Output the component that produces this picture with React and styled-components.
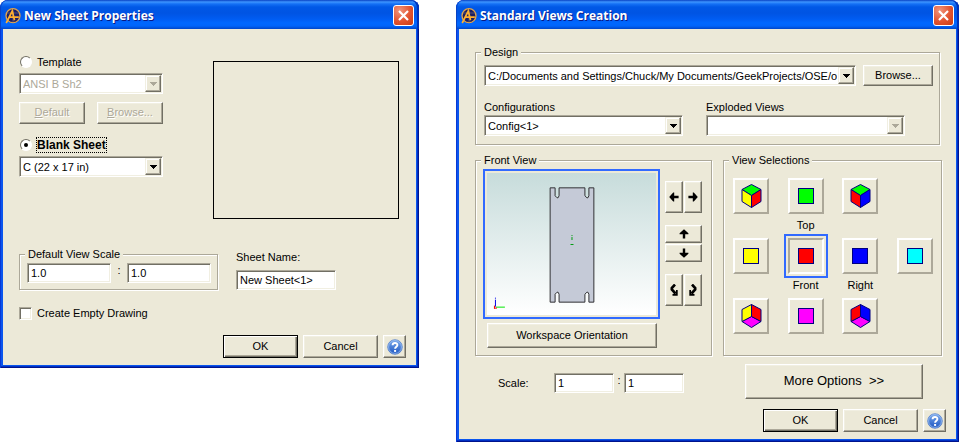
import React, { useId } from "react";
import styled, { createGlobalStyle, css } from "styled-components";

const face = "#ece9d8";
const shade = "#aca899";
const dark = "#716f64";
const light = "#f1efe2";

const GlobalStyle = createGlobalStyle`
  * { box-sizing: border-box; }
  body {
    margin: 0;
    background: #fff;
    color: #000;
    font: 11px/14px "Liberation Sans", Arial, sans-serif;
  }
  button, input, select {
    font: inherit;
    color: inherit;
    margin: 0;
    border-radius: 0;
  }
`;

const Desktop = styled.main`
  display: grid;
  grid-template-columns: minmax(0, 419fr) minmax(0, 503fr);
  gap: 37px;
  align-items: start;
`;

const WindowFrame = styled.section`
  padding: 0 3px 3px;
  border-radius: 8px 8px 0 0;
  overflow: hidden;
  background: #0a55ee;
  box-shadow:
    inset 1px 0 #0838d4,
    inset -1px -1px #00138c,
    inset -2px -2px #0030c4;
`;

const TitleBar = styled.header`
  display: flex;
  align-items: center;
  height: 29px;
  margin: 0 -3px;
  padding: 2px 5px 0;
  gap: 3px;
  border-radius: 8px 8px 0 0;
  background: linear-gradient(
    #0842c4 0, #3d95ff 2px, #1470f5 4px, #0058e6 7px, #0054e3 13px,
    #005cf2 19px, #0068ff 23px, #0064fa 26px, #0046c8 29px
  );
  box-shadow: inset 1px 0 #0842c4, inset -2px 0 #0030b8;
`;

const Title = styled.h1`
  flex: 1;
  margin: 0;
  color: #fff;
  font: bold 12px/18px "Open Sans", "Noto Sans", sans-serif;
  text-shadow: 1px 1px #0a1883;
  white-space: nowrap;
`;

const CloseButton = styled.button`
  display: grid;
  place-items: center;
  width: 21px;
  height: 21px;
  padding: 0;
  border: 1px solid #fff;
  border-radius: 3px;
  background: radial-gradient(circle at 30% 25%, #f0957c, #e2532f 55%, #c93a12);
`;

const Body = styled.form`
  display: flex;
  flex-direction: column;
  background: ${face};
`;

const SheetBody = styled(Body)`
  padding: 25px 10px 7px 16px;
`;

const ViewsBody = styled(Body)`
  padding: 16px 10px 7px 16px;
`;

const Group = styled.fieldset`
  min-width: 0;
  margin: 0;
  padding: 0;
  border: 1px solid ${shade};
  box-shadow: 1px 1px #fff, inset 1px 1px #fff;
`;

const GroupContent = styled.div`
  padding: ${(p) => p.$pad};
`;

const Legend = styled.legend`
  margin-left: 5px;
  padding: 0 3px;
  height: 14px;
  background: ${face};
`;

const sunken = css`
  border: 1px solid;
  border-color: ${shade} #fff #fff ${shade};
  box-shadow: inset 1px 1px ${dark}, inset -1px -1px ${light};
  background: #fff;
`;

const TextInput = styled.input`
  ${sunken}
  min-width: 0;
  width: 100%;
  height: 20px;
  padding: 1px 3px 2px;
  outline: 0;
`;

const raised = css`
  border: 1px solid;
  border-color: #fff ${dark} ${dark} #fff;
  box-shadow: inset -1px -1px ${shade}, inset 1px 1px ${light};
  background: ${face};
`;

const PushButton = styled.button`
  ${raised}
  display: flex;
  align-items: center;
  justify-content: center;
  flex: ${(p) => p.$flex || "none"};
  width: ${(p) => p.$width || "75px"};
  height: ${(p) => p.$height || "23px"};
  padding: ${(p) => (p.$icon ? "0" : "0 0 2px")};
  white-space: pre;
  font-size: ${(p) => (p.$large ? "13px" : "11px")};
  ${(p) => p.$primary && css`
    border-color: #000;
    box-shadow: inset 1px 1px #fff, inset -1px -1px ${dark}, inset -2px -2px ${shade};
  `}
  &:disabled {
    color: ${shade};
    text-shadow: 1px 1px #fff;
  }
`;

const Mnemonic = styled.span`
  text-decoration: underline;
`;

const ComboFrame = styled.span`
  ${sunken}
  display: grid;
  grid-template-columns: minmax(0, 1fr) 16px;
  flex: ${(p) => p.$flex || "none"};
  min-width: 0;
  height: 21px;
  padding: 1px;
`;

const ComboSelect = styled.select`
  grid-area: 1 / 1 / 2 / 3;
  appearance: none;
  min-width: 0;
  width: 100%;
  padding: 0 17px 0 2px;
  border: 0;
  outline: 0;
  background: transparent;
  &:disabled { color: ${shade}; opacity: 1; }
`;

const ComboArrow = styled.span`
  ${raised}
  grid-area: 1 / 2;
  display: grid;
  place-items: center;
  border-color: ${light} ${dark} ${dark} ${light};
  box-shadow: inset -1px -1px ${shade}, inset 1px 1px #fff;
  pointer-events: none;
`;

function Combo({ label, value, disabled, flex }) {
  return (
    <ComboFrame $flex={flex}>
      <ComboSelect aria-label={label} disabled={disabled} defaultValue={value}>
        <option>{value}</option>
      </ComboSelect>
      <ComboArrow>
        <svg width="7" height="4" shapeRendering="crispEdges" aria-hidden="true">
          <path d="M0 0h7v1H6v1H5v1H4v1H3V3H2V2H1V1H0z" fill={disabled ? shade : "#000"} />
        </svg>
      </ComboArrow>
    </ComboFrame>
  );
}

/* New Sheet Properties */

const SheetTop = styled.div`
  display: grid;
  grid-template-columns: 144px minmax(0, 1fr);
  gap: 50px;
  padding-right: 7px;
`;

const SheetOptions = styled.div`
  display: flex;
  flex-direction: column;
  gap: 3px;
`;

const ChoiceLabel = styled.label`
  display: flex;
  align-items: center;
  height: 16px;
  gap: 5px;
`;

const Radio = styled.input`
  appearance: none;
  display: grid;
  place-items: center;
  width: 12px;
  height: 12px;
  margin: 0 0 0 1px;
  border: 1px solid;
  border-color: ${dark} #fff #fff ${dark};
  border-radius: 50%;
  background: #fff;
  &:checked::before {
    content: "";
    width: 4px;
    height: 4px;
    border-radius: 50%;
    background: #000;
  }
`;

const CheckBox = styled.input`
  ${sunken}
  appearance: none;
  width: 13px;
  height: 13px;
`;

const FocusedText = styled.span`
  outline: 1px dotted #000;
  font-weight: bold;
  font-size: 12px;
`;

const TemplateButtons = styled.div`
  display: flex;
  justify-content: space-between;
  padding: 5px 0 10px;
`;

const SheetPreview = styled.div`
  height: 158px;
  margin-top: 7px;
  border: 1px solid #000;
`;

const SheetFields = styled.div`
  display: grid;
  grid-template-columns: minmax(0, 199fr) minmax(0, 100fr);
  align-items: end;
  gap: 18px;
  margin: 28px 70px 15px 0;
`;

const Ratio = styled.div`
  display: grid;
  grid-template-columns: minmax(0, 1fr) ${(p) => p.$gap} minmax(0, 1fr);
  text-align: center;
`;

const NameField = styled.label`
  display: flex;
  flex-direction: column;
  gap: 6px;
  min-width: 0;
`;

const Footer = styled.footer`
  display: flex;
  justify-content: flex-end;
  gap: 5px;
  margin-top: ${(p) => p.$top};
`;

/* Standard Views Creation */

const DesignGroup = styled(Group)`
  margin-right: 6px;
`;

const PathRow = styled.div`
  display: flex;
  gap: 7px;
`;

const ConfigRow = styled.div`
  display: grid;
  grid-template-columns: minmax(0, 1fr) minmax(0, 1fr);
  gap: 23px;
  margin: 14px 28px 0 0;
`;

const Field = styled.label`
  display: flex;
  flex-direction: column;
  gap: 1px;
`;

const Panels = styled.div`
  display: grid;
  grid-template-columns: minmax(0, 237fr) minmax(0, 219fr);
  gap: 11px;
  margin: 8px 4px 17px 0;
`;

const FrontContent = styled.div`
  display: grid;
  grid-template-columns: minmax(0, 1fr) 37px;
  gap: 5px;
  padding: 2px 9px 7px 7px;
`;

const FrontColumn = styled.div`
  display: flex;
  flex-direction: column;
  gap: 4px;
`;

const Viewport = styled.div`
  display: flex;
  padding: 2px;
  border: 2px solid #316aff;
`;

const Drawing = styled.svg`
  width: 100%;
  height: 142px;
  background: linear-gradient(#c7dcdb, #fff);
`;

const OrientationRow = styled.div`
  display: flex;
  padding: 0 3px 0 4px;
`;

const MoveButtons = styled.div`
  display: flex;
  flex-direction: column;
  gap: 12px;
  padding-top: 12px;
`;

const ButtonPair = styled.div`
  display: flex;
  flex-direction: ${(p) => (p.$stack ? "column" : "row")};
  gap: 1px;
`;

const ArrowButton = styled.button`
  ${raised}
  display: grid;
  place-items: center;
  width: ${(p) => (p.$wide ? "37px" : "18px")};
  height: ${(p) => (p.$wide ? "18px" : "32px")};
  padding: 0;
`;

const ViewGrid = styled.div`
  display: grid;
  grid-template-columns: repeat(4, 36px);
  grid-template-rows: 60px 60px 56px;
  justify-content: space-between;
  padding: 11px 8px 0 9px;
`;

const ViewCell = styled.div`
  display: flex;
  flex-direction: column;
  align-items: center;
  gap: 4px;
`;

const ViewButton = styled.button`
  display: grid;
  place-items: center;
  width: 36px;
  height: 36px;
  padding: 0;
  border: 2px solid;
  border-color: #fff ${shade} ${shade} #fff;
  background: ${face};
  ${(p) => p.$active && css`
    border-color: ${shade} #fff #fff ${shade};
    outline: 2px solid #316aff;
    outline-offset: 2px;
  `}
`;

const OptionsRow = styled.div`
  display: flex;
  justify-content: space-between;
  align-items: flex-start;
  padding: 0 23px;
  margin-top: -9px;
`;

const ScaleField = styled.div`
  display: grid;
  grid-template-columns: 56px 130px;
  align-items: center;
  margin-top: 9px;
`;

const AppIcon = () => (
  <svg width="16" height="16" viewBox="0 0 16 16" aria-hidden="true">
    <circle cx="8" cy="7.7" r="7" fill="#1c1f62" stroke="#e0a44c" strokeWidth="1.3" />
    <path d="M8 1.5v13M2 5h12" stroke="#6d6480" strokeWidth=".7" />
    <path d="M1.2 15L7.3 3L9.5 12.3M3.8 9.2h10" fill="none" stroke="#ffb030" strokeWidth="1.7" />
  </svg>
);

const HelpIcon = () => {
  const id = useId();
  return (
    <svg width="16" height="16" viewBox="0 0 16 16" aria-hidden="true">
      <defs>
        <linearGradient id={id} x1="0" y1="0" x2="0" y2="1">
          <stop offset="0" stopColor="#78a8ec" />
          <stop offset="1" stopColor="#1c55c0" />
        </linearGradient>
      </defs>
      <circle cx="8" cy="8" r="7.3" fill={`url(#${id})`} stroke="#5a84cc" strokeWidth=".8" />
      <circle cx="8" cy="8" r="6.4" fill="none" stroke="#a9c8f5" strokeWidth=".7" />
      <path d="M5.6 6.3C5.6 3.2 10.5 3.3 10.4 6C10.4 7.7 8.1 7.7 8.1 9.8" fill="none" stroke="#fff" strokeWidth="1.9" />
      <path d="M7.1 11h2v1.9h-2z" fill="#fff" />
    </svg>
  );
};

function Window({ title, children }) {
  return (
    <WindowFrame aria-label={title}>
      <TitleBar>
        <AppIcon />
        <Title>{title}</Title>
        <CloseButton type="button" aria-label="Close">
          <svg width="11" height="11" aria-hidden="true">
            <path d="M1 1l9 9M10 1l-9 9" stroke="#fff" strokeWidth="2.2" />
          </svg>
        </CloseButton>
      </TitleBar>
      {children}
    </WindowFrame>
  );
}

function DialogButtons({ top }) {
  return (
    <Footer $top={top}>
      <PushButton type="button" $primary>OK</PushButton>
      <PushButton type="button">Cancel</PushButton>
      <PushButton type="button" $icon $width="23px" aria-label="Help"><HelpIcon /></PushButton>
    </Footer>
  );
}

const arrowTurns = { left: 0, up: 90, right: 180, down: 270 };

const StraightArrow = ({ to }) => (
  <svg width="10" height="10" viewBox="0 0 10 10" aria-hidden="true">
    <path
      d="M.2 5L4.2 .6h1v3.2H9.6v2.4H5.2V9.4h-1z"
      transform={`rotate(${arrowTurns[to]} 5 5)`}
    />
  </svg>
);

const CurvedArrow = ({ mirrored }) => (
  <svg width="8" height="12" viewBox="0 0 8 12" aria-hidden="true">
    <g transform={mirrored ? "translate(8 0) scale(-1 1)" : undefined}>
      <path d="M5 .5L1.8 4v1.5L5.5 9.5" fill="none" stroke="#000" strokeWidth="2.6" />
      <path d="M7.7 6v5.7H2.5V10L6 9.5V6z" />
    </g>
  </svg>
);

const Square = ({ color }) => (
  <svg width="16" height="16" aria-hidden="true">
    <rect x=".5" y=".5" width="15" height="15" fill={color} stroke="#000080" />
  </svg>
);

const cubeFaces = {
  above: ["M10.5 .5l9.5 5-9.5 6L1 5.5z", "M1 5.5l9.5 6v12L1 17.5z", "M20 5.5l-9.5 6v12l9.5-6z"],
  below: ["M10.5 12.5l9.5 5-9.5 6L1 17.5z", "M1 5.5l9.5-5v12L1 17.5z", "M20 5.5l-9.5-5v12l9.5 5z"],
};

const Cube = ({ from, colors }) => (
  <svg width="21" height="24" viewBox="0 0 21 24" aria-hidden="true">
    {cubeFaces[from].map((d, i) => (
      <path key={d} d={d} fill={colors[i]} stroke="#000080" strokeLinejoin="round" />
    ))}
  </svg>
);

const red = "#ff0000", green = "#00ff00", blue = "#0000ff";
const yellow = "#ffff00", cyan = "#00ffff", magenta = "#ff00ff";

const views = [
  { name: "Top left isometric", icon: <Cube from="above" colors={[green, yellow, red]} /> },
  { name: "Top", caption: true, icon: <Square color={green} /> },
  { name: "Top right isometric", icon: <Cube from="above" colors={[green, red, blue]} /> },
  null,
  { name: "Left", icon: <Square color={yellow} /> },
  { name: "Front", caption: true, active: true, icon: <Square color={red} /> },
  { name: "Right", caption: true, icon: <Square color={blue} /> },
  { name: "Back", icon: <Square color={cyan} /> },
  { name: "Bottom left isometric", icon: <Cube from="below" colors={[magenta, yellow, red]} /> },
  { name: "Bottom", icon: <Square color={magenta} /> },
  { name: "Bottom right isometric", icon: <Cube from="below" colors={[magenta, red, blue]} /> },
];

function NewSheetProperties() {
  return (
    <Window title="New Sheet Properties">
      <SheetBody>
        <SheetTop>
          <SheetOptions>
            <ChoiceLabel>
              <Radio type="radio" name="source" />
              <span>Template</span>
            </ChoiceLabel>
            <Combo label="Template" value="ANSI B Sh2" disabled />
            <TemplateButtons>
              <PushButton type="button" disabled $width="66px" $height="22px">
                <Mnemonic>D</Mnemonic>efault
              </PushButton>
              <PushButton type="button" disabled $width="66px" $height="22px">
                <Mnemonic>B</Mnemonic>rowse...
              </PushButton>
            </TemplateButtons>
            <ChoiceLabel>
              <Radio type="radio" name="source" defaultChecked />
              <FocusedText>Blank Sheet</FocusedText>
            </ChoiceLabel>
            <Combo label="Sheet size" value="C (22 x 17 in)" />
          </SheetOptions>
          <SheetPreview />
        </SheetTop>
        <SheetFields>
          <Group>
            <Legend>Default View Scale</Legend>
            <GroupContent $pad="2px 6px 6px 7px">
              <Ratio $gap="16px">
                <TextInput aria-label="Scale numerator" defaultValue="1.0" />
                <span>:</span>
                <TextInput aria-label="Scale denominator" defaultValue="1.0" />
              </Ratio>
            </GroupContent>
          </Group>
          <NameField>
            Sheet Name:
            <TextInput defaultValue="New Sheet<1>" />
          </NameField>
        </SheetFields>
        <ChoiceLabel>
          <CheckBox type="checkbox" />
          <span>Create Empty Drawing</span>
        </ChoiceLabel>
        <DialogButtons top="14px" />
      </SheetBody>
    </Window>
  );
}

function FrontView() {
  return (
    <Group>
      <Legend>Front View</Legend>
      <FrontContent>
        <FrontColumn>
          <Viewport>
            <Drawing viewBox="0 0 170 142" role="img" aria-label="Front view of part">
              <path
                d="M63.5 14.5h5v8l2 2h1l1-2v-8h26v8l2 2h1l1-2v-8h5v115h-5v-8l-1-2h-1l-2 2v8h-26v-8l-1-2h-1l-2 2v8h-5z"
                fill="#c5cad7"
                stroke="#303033"
              />
              <path d="M85.5 62v1M85.5 64v3M84 71.5h3" stroke="#009c10" />
              <path d="M9 134.5h9" stroke="#00e800" />
              <path d="M8.5 125v1M8.5 127v7" stroke="#0000e8" />
              <path d="M7 135.5h3M7.5 133v3" stroke="#f00000" />
            </Drawing>
          </Viewport>
          <OrientationRow>
            <PushButton type="button" $flex="1" $height="25px">Workspace Orientation</PushButton>
          </OrientationRow>
        </FrontColumn>
        <MoveButtons>
          <ButtonPair>
            <ArrowButton type="button" aria-label="Turn left"><StraightArrow to="left" /></ArrowButton>
            <ArrowButton type="button" aria-label="Turn right"><StraightArrow to="right" /></ArrowButton>
          </ButtonPair>
          <ButtonPair $stack>
            <ArrowButton type="button" $wide aria-label="Turn up"><StraightArrow to="up" /></ArrowButton>
            <ArrowButton type="button" $wide aria-label="Turn down"><StraightArrow to="down" /></ArrowButton>
          </ButtonPair>
          <ButtonPair>
            <ArrowButton type="button" aria-label="Rotate counterclockwise"><CurvedArrow /></ArrowButton>
            <ArrowButton type="button" aria-label="Rotate clockwise"><CurvedArrow mirrored /></ArrowButton>
          </ButtonPair>
        </MoveButtons>
      </FrontContent>
    </Group>
  );
}

function StandardViewsCreation() {
  return (
    <Window title="Standard Views Creation">
      <ViewsBody>
        <DesignGroup>
          <Legend>Design</Legend>
          <GroupContent $pad="6px 6px 8px 8px">
            <PathRow>
              <Combo
                label="Design file"
                flex="1"
                value="C:/Documents and Settings/Chuck/My Documents/GeekProjects/OSE/o"
              />
              <PushButton type="button" $width="70px" $height="21px">Browse...</PushButton>
            </PathRow>
            <ConfigRow>
              <Field>
                Configurations
                <Combo value="Config<1>" />
              </Field>
              <Field>
                Exploded Views
                <Combo value="" disabled />
              </Field>
            </ConfigRow>
          </GroupContent>
        </DesignGroup>
        <Panels>
          <FrontView />
          <Group>
            <Legend>View Selections</Legend>
            <ViewGrid>
              {views.map((view, i) => (
                <ViewCell key={i}>
                  {view && (
                    <ViewButton type="button" aria-label={view.name} $active={view.active}>
                      {view.icon}
                    </ViewButton>
                  )}
                  {view && view.caption && <span>{view.name}</span>}
                </ViewCell>
              ))}
            </ViewGrid>
          </Group>
        </Panels>
        <OptionsRow>
          <ScaleField>
            <span>Scale:</span>
            <Ratio $gap="10px">
              <TextInput aria-label="Scale numerator" defaultValue="1" />
              <span>:</span>
              <TextInput aria-label="Scale denominator" defaultValue="1" />
            </Ratio>
          </ScaleField>
          <PushButton type="button" $width="178px" $height="35px" $large>{"More Options  >>"}</PushButton>
        </OptionsRow>
        <DialogButtons top="10px" />
      </ViewsBody>
    </Window>
  );
}

export default function App() {
  return (
    <>
      <GlobalStyle />
      <Desktop>
        <NewSheetProperties />
        <StandardViewsCreation />
      </Desktop>
    </>
  );
}
